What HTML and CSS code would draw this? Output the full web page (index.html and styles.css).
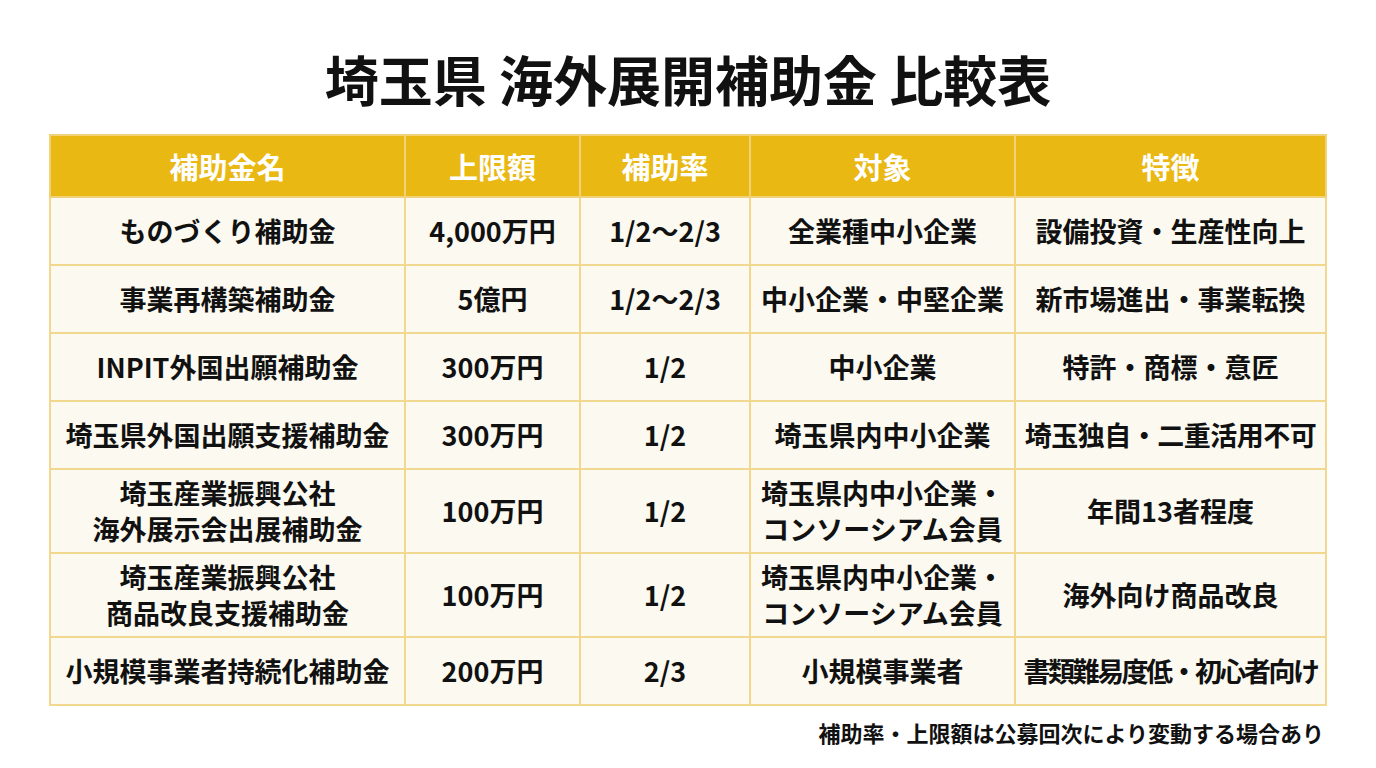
FILE: index.html
```html
<!DOCTYPE html>
<html lang="ja">
<head>
<meta charset="utf-8">
<link rel="stylesheet" href="styles.css">
</head>
<body>
<main class="page">
  <h1 class="title">埼玉県 海外展開補助金 比較表</h1>
  <table class="cmp">
    <colgroup>
      <col class="c1"><col class="c2"><col class="c3"><col class="c4"><col class="c5">
    </colgroup>
    <thead>
      <tr><th>補助金名</th><th>上限額</th><th>補助率</th><th>対象</th><th>特徴</th></tr>
    </thead>
    <tbody>
      <tr class="r"><td>ものづくり補助金</td><td>4,000万円</td><td>1/2〜2/3</td><td>全業種中小企業</td><td>設備投資・生産性向上</td></tr>
      <tr class="r"><td>事業再構築補助金</td><td>5億円</td><td>1/2〜2/3</td><td>中小企業・中堅企業</td><td>新市場進出・事業転換</td></tr>
      <tr class="r"><td>INPIT外国出願補助金</td><td>300万円</td><td>1/2</td><td>中小企業</td><td>特許・商標・意匠</td></tr>
      <tr class="r"><td>埼玉県外国出願支援補助金</td><td>300万円</td><td>1/2</td><td>埼玉県内中小企業</td><td class="tight1">埼玉独自・二重活用不可</td></tr>
      <tr class="r2"><td>埼玉産業振興公社<br>海外展示会出展補助金</td><td>100万円</td><td>1/2</td><td>埼玉県内中小企業・<br>コンソーシアム会員</td><td>年間13者程度</td></tr>
      <tr class="r2"><td>埼玉産業振興公社<br>商品改良支援補助金</td><td>100万円</td><td>1/2</td><td>埼玉県内中小企業・<br>コンソーシアム会員</td><td>海外向け商品改良</td></tr>
      <tr class="r"><td>小規模事業者持続化補助金</td><td>200万円</td><td>2/3</td><td>小規模事業者</td><td class="tight2">書類難易度低・初心者向け</td></tr>
    </tbody>
  </table>
  <p class="note">補助率・上限額は公募回次により変動する場合あり</p>
</main>
</body>
</html>
```

FILE: styles.css
```css
html, body {
  margin: 0;
  padding: 0;
  background: #ffffff;
}
body {
  font-family: "Noto Sans CJK JP", "Noto Sans", sans-serif;
  color: #111111;
}
.page {
  width: 1276px;
  margin: 0 auto;
  display: flex;
  flex-direction: column;
  align-items: center;
}
.title {
  margin: 44px 0 0 0;
  height: 90px;
  font-size: 54px;
  font-weight: 700;
  line-height: 70px;
  text-align: center;
}
.cmp {
  width: 1276px;
  border-collapse: collapse;
  table-layout: fixed;
  border: 2px solid #efd27e;
}
.c1 { width: 355px; }
.c2 { width: 175px; }
.c3 { width: 170px; }
.c4 { width: 265px; }
.c5 { width: 311px; }
.cmp th, .cmp td {
  border: 2px solid #f1d88e;
  text-align: center;
  vertical-align: middle;
  padding: 0;
  font-weight: 700;
  white-space: nowrap;
}
.cmp th {
  background: #e9b813;
  color: #ffffff;
  height: 60px;
  font-size: 29px;
  border-color: #f1d17a;
}
.cmp td {
  background: #fbf9f0;
  font-size: 27px;
  line-height: 36px;
  color: #111111;
}
.cmp td.tight1 { letter-spacing: -0.5px; }
.cmp td.tight2 { letter-spacing: -2.5px; }
.r td { height: 66px; }
.r2 td { height: 82px; }
.note {
  align-self: flex-end;
  margin: 11px 2px 0 0;
  font-size: 22px;
  font-weight: 700;
  line-height: 30px;
}
```
